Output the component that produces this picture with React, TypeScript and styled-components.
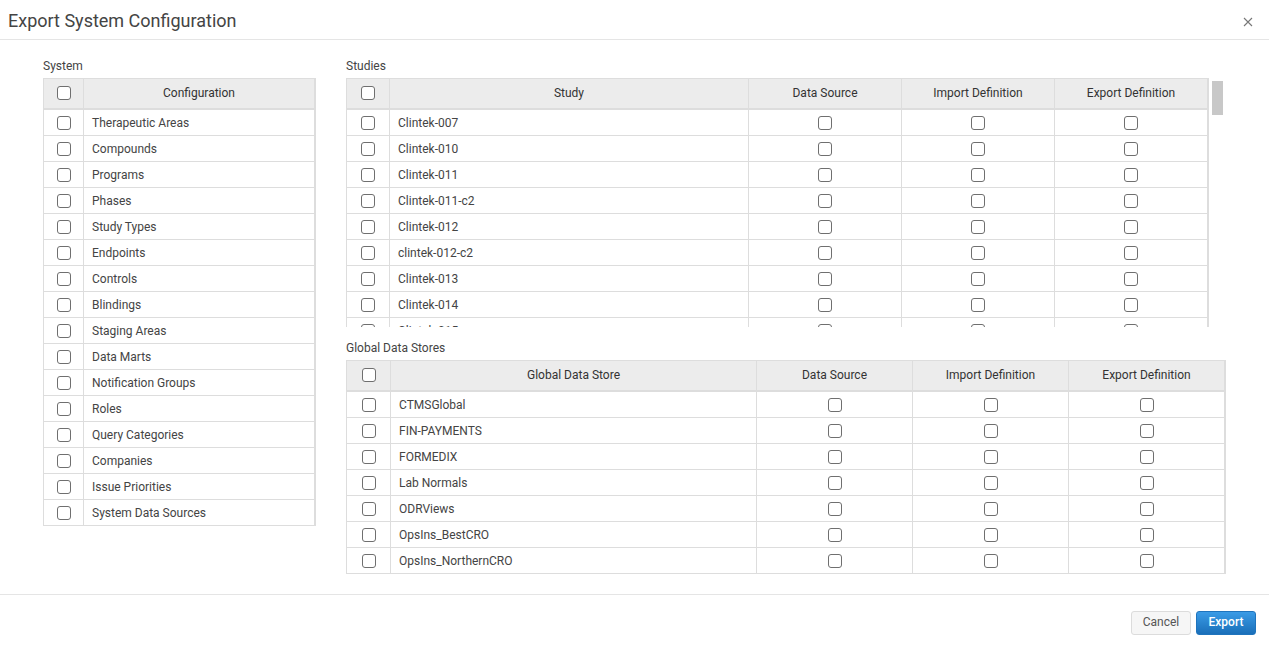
import React from "react";
import styled, { createGlobalStyle } from "styled-components";

const GlobalStyle = createGlobalStyle`
  * { box-sizing: border-box; }
  html, body { margin: 0; padding: 0; background: #fff; }
  body { font-family: Roboto, "Liberation Sans", Arial, sans-serif; color: #333; }
`;

const Modal = styled.div`
  width: 1269px;
  height: 648px;
  display: flex;
  flex-direction: column;
  background: #fff;
`;

const Header = styled.div`
  height: 40px;
  border-bottom: 1px solid #e5e5e5;
  display: flex;
  align-items: center;
  justify-content: space-between;
  padding: 0 16px 0 8px;
`;

const Title = styled.h1`
  margin: 0;
  font-size: 18px;
  font-weight: 400;
  color: #444;
  line-height: 22px;
  padding-top: 2px;
`;

const CloseButton = styled.button`
  border: 0;
  background: none;
  padding: 0;
  width: 10px;
  height: 10px;
  display: flex;
  margin-top: 4px;
  cursor: pointer;
`;

const Body = styled.div`
  display: flex;
  gap: 30px;
  padding: 18px 44px 20px 43px;
  height: 554px;
`;

const LeftColumn = styled.div`
  width: 273px;
  display: flex;
  flex-direction: column;
`;

const RightColumn = styled.div`
  width: 879px;
  display: flex;
  flex-direction: column;
`;

const SectionLabel = styled.div<{ $top?: number }>`
  font-size: 12px;
  line-height: 16px;
  color: #444;
  margin-bottom: 4px;
  margin-top: ${(p) => p.$top ?? 0}px;
`;

const ScrollArea = styled.div`
  display: flex;
  height: 249px;
`;

const Clip = styled.div`
  width: 863px;
  height: 249px;
  overflow: hidden;
`;

const ScrollTrack = styled.div`
  width: 16px;
  padding: 3px 2px 0 3px;
`;

const ScrollThumb = styled.div`
  width: 11px;
  height: 34px;
  background: #c8c8c8;
`;

const Table = styled.table<{ $thickRight?: boolean }>`
  border-collapse: separate;
  border-spacing: 0;
  table-layout: fixed;
  width: 100%;
  border-top: 1px solid #ddd;
  border-left: 1px solid #ddd;
  border-right: ${(p) => (p.$thickRight ? "1px solid #ddd" : "0")};
  font-size: 12px;
`;

const Th = styled.th`
  box-sizing: border-box;
  height: 31px;
  padding: 0 0 2px;
  background: #ececec;
  border-right: 1px solid #ddd;
  border-bottom: 2px solid #ddd;
  font-weight: 400;
  color: #333;
  text-align: center;
  vertical-align: middle;
`;

const Td = styled.td<{ $center?: boolean }>`
  box-sizing: border-box;
  height: 26px;
  padding: 0 ${(p) => (p.$center ? 0 : 8)}px;
  border-right: 1px solid #ddd;
  border-bottom: 1px solid #ddd;
  color: #444;
  text-align: ${(p) => (p.$center ? "center" : "left")};
  vertical-align: middle;
  white-space: nowrap;
  overflow: hidden;
`;

const Check = styled.input.attrs({ type: "checkbox" })`
  appearance: none;
  -webkit-appearance: none;
  width: 14px;
  height: 14px;
  margin: 0;
  border: 1px solid #6f6f6f;
  border-radius: 3px;
  background: #fff;
  vertical-align: middle;
  display: inline-block;
`;

const Footer = styled.div`
  border-top: 1px solid #e5e5e5;
  display: flex;
  justify-content: flex-end;
  gap: 5px;
  padding: 16px 13px 0 0;
  flex: 1;
`;

const Button = styled.button<{ $primary?: boolean }>`
  height: 24px;
  width: 60px;
  border-radius: 3px;
  font-family: Roboto, "Liberation Sans", Arial, sans-serif;
  font-size: 12px;
  padding: 0 0 2px;
  cursor: pointer;
  border: 1px solid ${(p) => (p.$primary ? "#1f74bd" : "#dcdcdc")};
  background: ${(p) =>
    p.$primary ? "linear-gradient(#3a9be6, #1a6fb9)" : "#f6f6f6"};
  color: ${(p) => (p.$primary ? "#fff" : "#555")};
  font-weight: ${(p) => (p.$primary ? 500 : 400)};
`;

const systemItems = [
  "Therapeutic Areas",
  "Compounds",
  "Programs",
  "Phases",
  "Study Types",
  "Endpoints",
  "Controls",
  "Blindings",
  "Staging Areas",
  "Data Marts",
  "Notification Groups",
  "Roles",
  "Query Categories",
  "Companies",
  "Issue Priorities",
  "System Data Sources",
];

const studies = [
  "Clintek-007",
  "Clintek-010",
  "Clintek-011",
  "Clintek-011-c2",
  "Clintek-012",
  "clintek-012-c2",
  "Clintek-013",
  "Clintek-014",
  "Clintek-015",
];

const stores = [
  "CTMSGlobal",
  "FIN-PAYMENTS",
  "FORMEDIX",
  "Lab Normals",
  "ODRViews",
  "OpsIns_BestCRO",
  "OpsIns_NorthernCRO",
];

const defCols = ["Data Source", "Import Definition", "Export Definition"];

function DefinitionTable({
  nameHeader,
  names,
  widths,
}: {
  nameHeader: string;
  names: string[];
  widths: number[];
}) {
  return (
    <Table $thickRight>
      <colgroup>
        {widths.map((w, i) => (
          <col key={i} style={{ width: w }} />
        ))}
      </colgroup>
      <thead>
        <tr>
          <Th>
            <Check />
          </Th>
          <Th>{nameHeader}</Th>
          {defCols.map((c) => (
            <Th key={c}>{c}</Th>
          ))}
        </tr>
      </thead>
      <tbody>
        {names.map((n) => (
          <tr key={n}>
            <Td $center>
              <Check />
            </Td>
            <Td>{n}</Td>
            {defCols.map((c) => (
              <Td $center key={c}>
                <Check />
              </Td>
            ))}
          </tr>
        ))}
      </tbody>
    </Table>
  );
}

export default function App() {
  return (
    <>
      <GlobalStyle />
      <Modal>
        <Header>
          <Title>Export System Configuration</Title>
          <CloseButton aria-label="Close">
            <svg width="10" height="10" viewBox="0 0 10 10">
              <path d="M1 1L9 9M9 1L1 9" stroke="#777" strokeWidth="1.1" />
            </svg>
          </CloseButton>
        </Header>
        <Body>
          <LeftColumn>
            <SectionLabel>System</SectionLabel>
            <Table $thickRight>
              <colgroup>
                <col style={{ width: 40 }} />
                <col />
              </colgroup>
              <thead>
                <tr>
                  <Th>
                    <Check />
                  </Th>
                  <Th>Configuration</Th>
                </tr>
              </thead>
              <tbody>
                {systemItems.map((s) => (
                  <tr key={s}>
                    <Td $center>
                      <Check />
                    </Td>
                    <Td>{s}</Td>
                  </tr>
                ))}
              </tbody>
            </Table>
          </LeftColumn>
          <RightColumn>
            <SectionLabel>Studies</SectionLabel>
            <ScrollArea>
              <Clip>
                <DefinitionTable
                  nameHeader="Study"
                  names={studies}
                  widths={[43, 359, 153, 153, 153]}
                />
              </Clip>
              <ScrollTrack>
                <ScrollThumb />
              </ScrollTrack>
            </ScrollArea>
            <SectionLabel $top={13}>Global Data Stores</SectionLabel>
            <DefinitionTable
              nameHeader="Global Data Store"
              names={stores}
              widths={[44, 366, 156, 156, 156]}
            />
          </RightColumn>
        </Body>
        <Footer>
          <Button>Cancel</Button>
          <Button $primary>Export</Button>
        </Footer>
      </Modal>
    </>
  );
}
